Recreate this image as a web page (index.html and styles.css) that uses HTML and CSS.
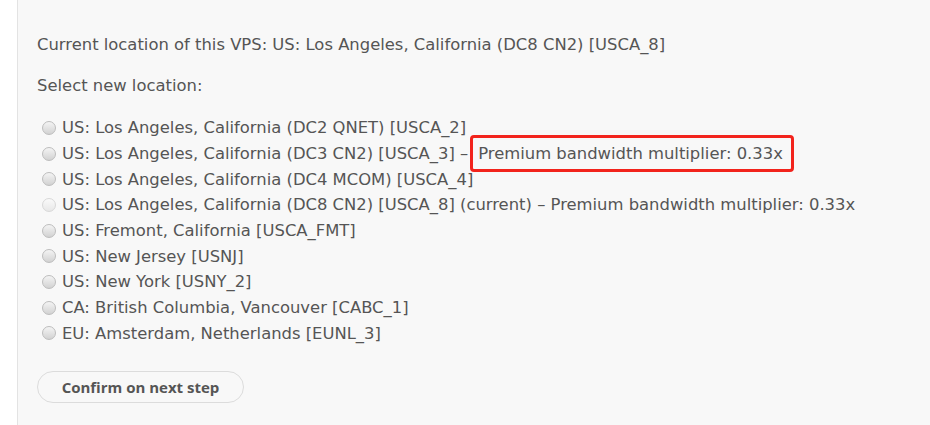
FILE: index.html
```html
<!DOCTYPE html>
<html lang="en">
<head>
    <meta charset="UTF-8">
    <title>Change location</title>
    <link rel="stylesheet" href="styles.css">
</head>
<body>
    <div class="panel">
        <p class="current">Current location of this VPS: US: Los Angeles, California (DC8 CN2) [USCA_8]</p>
        <p class="select">Select new location:</p>
        <form class="locations">
            <label class="loc"><input type="radio" name="loc"> US: Los Angeles, California (DC2 QNET) [USCA_2]</label>
            <label class="loc"><input type="radio" name="loc"> US: Los Angeles, California (DC3 CN2) [USCA_3] &ndash; <span class="mark">Premium bandwidth multiplier: 0.33x</span></label>
            <label class="loc"><input type="radio" name="loc"> US: Los Angeles, California (DC4 MCOM) [USCA_4]</label>
            <label class="loc"><input type="radio" name="loc" disabled> US: Los Angeles, California (DC8 CN2) [USCA_8] (current) &ndash; Premium bandwidth multiplier: 0.33x</label>
            <label class="loc"><input type="radio" name="loc"> US: Fremont, California [USCA_FMT]</label>
            <label class="loc"><input type="radio" name="loc"> US: New Jersey [USNJ]</label>
            <label class="loc"><input type="radio" name="loc"> US: New York [USNY_2]</label>
            <label class="loc"><input type="radio" name="loc"> CA: British Columbia, Vancouver [CABC_1]</label>
            <label class="loc"><input type="radio" name="loc"> EU: Amsterdam, Netherlands [EUNL_3]</label>
            <button type="button" class="confirm">Confirm on next step</button>
        </form>
    </div>
</body>
</html>
```

FILE: styles.css
```css
* {
    margin: 0;
    padding: 0;
    box-sizing: border-box;
}

body {
    background: #fff;
    font-family: "DejaVu Sans", Verdana, sans-serif;
    font-size: 16.4px;
    color: #555;
    height: 425px;
    overflow: hidden;
}

.panel {
    margin-left: 17px;
    height: 425px;
    background: #f8f8f8;
    border-left: 1px solid #e3e3e3;
    padding: 34px 0 0 19px;
}

.current {
    line-height: 22px;
    margin-bottom: 19px;
}

.select {
    line-height: 22px;
    margin-bottom: 18px;
}

.locations {
    display: flex;
    flex-direction: column;
    align-items: flex-start;
}

.loc {
    display: flex;
    align-items: center;
    height: 25.7px;
    white-space: nowrap;
}

.loc input {
    appearance: none;
    -webkit-appearance: none;
    width: 14px;
    height: 14px;
    min-width: 14px;
    border-radius: 50%;
    border: 1px solid #bdbdbd;
    background: linear-gradient(#f4f4f4, #d2d2d2);
    margin: 0 6px 0 5px;
    flex-shrink: 0;
}

.loc input:disabled {
    border-color: #d8d8d8;
    background: linear-gradient(#fafafa, #e8e8e8);
}

.mark {
    position: relative;
    margin-left: 10px;
}

.mark::after {
    content: "";
    position: absolute;
    left: -8px;
    right: -11px;
    top: -9px;
    bottom: -9px;
    border: 3px solid #f2231c;
    border-radius: 4px;
}

.confirm {
    margin-top: 25px;
    width: 207px;
    height: 32px;
    border: 1px solid #dcdcdc;
    border-radius: 16px;
    background: #f8f8f8;
    font-family: "Open Sans", sans-serif;
    font-weight: bold;
    font-size: 15px;
    color: #555;
}
```
